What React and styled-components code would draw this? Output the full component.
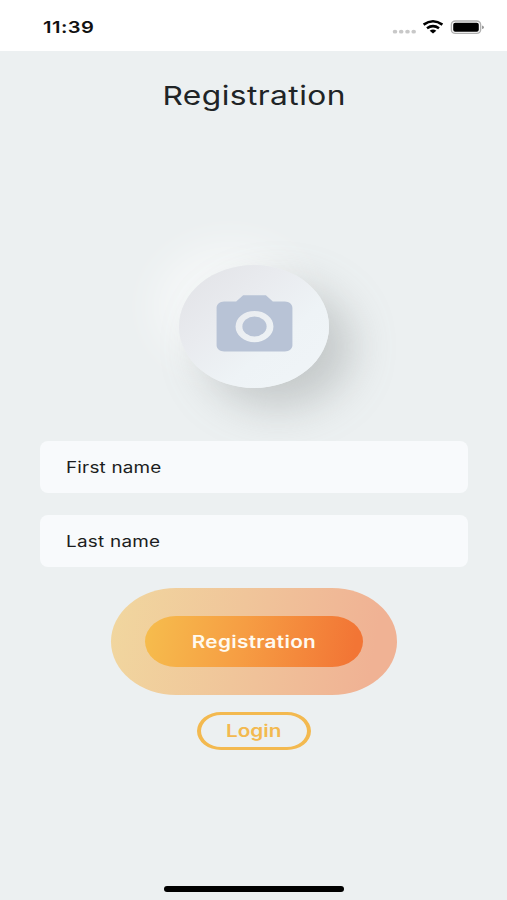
import React from "react";
import styled, { createGlobalStyle } from "styled-components";

const GlobalStyle = createGlobalStyle`
  * { box-sizing: border-box; }
  body { margin: 0; background: #ecf0f1; }
  button, input { font: inherit; }
`;

const Screen = styled.main`
  height: 900px;
  width: 507px;
  display: flex;
  flex-direction: column;
  align-items: center;
  overflow: hidden;
  background: #ecf0f1;
  color: #202426;
  font-family: Inter, "Liberation Sans", sans-serif;
`;

const StatusBar = styled.header`
  width: 100%;
  height: 51px;
  flex: none;
  display: flex;
  justify-content: space-between;
  align-items: center;
  padding: 5px 23px 0 43px;
  background: #fff;
  color: #111;
`;

const StatusIcons = styled.div`
  display: flex;
  align-items: center;
  svg { display: block; }
`;

/* Wide lettering: the type is set at its height and extended sideways. */
const Wide = styled.span`
  display: inline-block;
  white-space: nowrap;
  font-size: ${(p) => p.$size}px;
  font-weight: ${(p) => p.$weight || 400};
  line-height: 1.2;
  letter-spacing: ${(p) => p.$spacing || 0}px;
  transform: scaleX(1.22);
  transform-origin: ${(p) => p.$origin || "center"};
`;

const Title = styled.h1`
  margin: 27px 0 0 2px;
  height: 32px;
  line-height: 32px;
  font-weight: 400;
`;

const Avatar = styled.button`
  width: 150px;
  height: 123px;
  margin: 155px 0 0;
  padding: 0 0 0 1px;
  border: 0;
  flex: none;
  display: grid;
  place-items: center;
  border-radius: 50%;
  background: linear-gradient(140deg, #e3e4e8 8%, #e9ebef 36%, #eef3f6 64%, #f0f5f8 100%);
  box-shadow: 24px 20px 42px rgba(135, 140, 140, 0.38), -24px -20px 42px rgba(255, 255, 255, 0.5);
  svg { display: block; }
`;

const Fields = styled.form`
  width: 428px;
  margin-top: 53px;
  display: grid;
  gap: 22px;
`;

const Field = styled.label`
  height: 52px;
  display: flex;
  align-items: center;
  padding: 2px 0 0 26px;
  border-radius: 8px;
  background: #f8fafc;
  color: #1b1d20;
`;

const RegisterHalo = styled.div`
  width: 286px;
  height: 107px;
  margin-top: 21px;
  flex: none;
  display: grid;
  place-items: center;
  border-radius: 65px / 53.5px;
  background: linear-gradient(100deg, #f1d79f, #f0c59a 45%, #f0b294 90%);
`;

const RegisterButton = styled.button`
  width: 218px;
  height: 51px;
  padding: 1px 0 0;
  border: 0;
  border-radius: 31px / 25.5px;
  background: linear-gradient(100deg, #f6bd4d, #f69d43 45%, #f27535 95%);
  color: #fffaf0;
`;

const LoginButton = styled.button`
  width: 114px;
  height: 38px;
  margin: 17px 0 0 1px;
  padding: 0;
  flex: none;
  border: solid #f3b94f;
  border-width: 3px 4px;
  border-radius: 24px / 19px;
  background: transparent;
  color: #f3b94f;
`;

const HomeIndicator = styled.div`
  width: 180px;
  height: 6px;
  margin: auto 0 8px 1px;
  border-radius: 3px;
  background: #000;
`;

function DeviceStatus() {
  return (
    <StatusIcons>
      <svg width="92" height="24" viewBox="0 0 92 24">
        <g fill="#c8c8c8">
          <ellipse cx="3" cy="15.7" rx="2.3" ry="1.9" />
          <ellipse cx="9.2" cy="15.7" rx="2.3" ry="1.9" />
          <ellipse cx="15.5" cy="15.7" rx="2.3" ry="1.9" />
          <ellipse cx="21.7" cy="15.7" rx="2.3" ry="1.9" />
        </g>
        <g fill="none" stroke="#000" strokeWidth="2.6">
          <path d="M31.6 8.6Q41 1.9 50.4 8.6" />
          <path d="M35 12.2Q41 8 47 12.2" />
        </g>
        <path d="M37.7 14.8Q41 12.4 44.3 14.8L41 17.6Z" />
        <rect x="59.4" y="5" width="29.2" height="12.4" rx="4" ry="3.4" fill="#fff" stroke="#b0b0b0" strokeWidth="1.4" />
        <rect x="61.2" y="6.8" width="25.6" height="8.9" rx="2" />
        <path d="M90 9.4Q92 9.8 92 11.2T90 13Z" fill="#999" />
      </svg>
    </StatusIcons>
  );
}

function CameraIcon() {
  return (
    <svg width="91" height="75" viewBox="0 0 24 24" preserveAspectRatio="none" fill="#b8c3d6">
      <path d="M9 2 7.17 4H4c-1.1 0-2 .9-2 2v12c0 1.1.9 2 2 2h16c1.1 0 2-.9 2-2V6c0-1.1-.9-2-2-2h-3.17L15 2H9Zm3 15a5 5 0 1 1 0-10 5 5 0 0 1 0 10Z" />
      <circle cx="12" cy="12" r="3.2" />
    </svg>
  );
}

export default function App() {
  return (
    <>
      <GlobalStyle />
      <Screen>
        <StatusBar>
          <Wide $size={16.5} $weight={600} $spacing={0.35} $origin="left">11:39</Wide>
          <DeviceStatus />
        </StatusBar>
        <Title><Wide $size={26} $spacing={0.35}>Registration</Wide></Title>
        <Avatar type="button" aria-label="Add photo"><CameraIcon /></Avatar>
        <Fields>
          <Field><Wide $size={15.5} $spacing={0.15} $origin="left">First name</Wide></Field>
          <Field><Wide $size={15.5} $spacing={0.2} $origin="left">Last name</Wide></Field>
        </Fields>
        <RegisterHalo>
          <RegisterButton type="button"><Wide $size={17} $weight={600} $spacing={0.25}>Registration</Wide></RegisterButton>
        </RegisterHalo>
        <LoginButton type="button"><Wide $size={17} $weight={600}>Login</Wide></LoginButton>
        <HomeIndicator />
      </Screen>
    </>
  );
}
